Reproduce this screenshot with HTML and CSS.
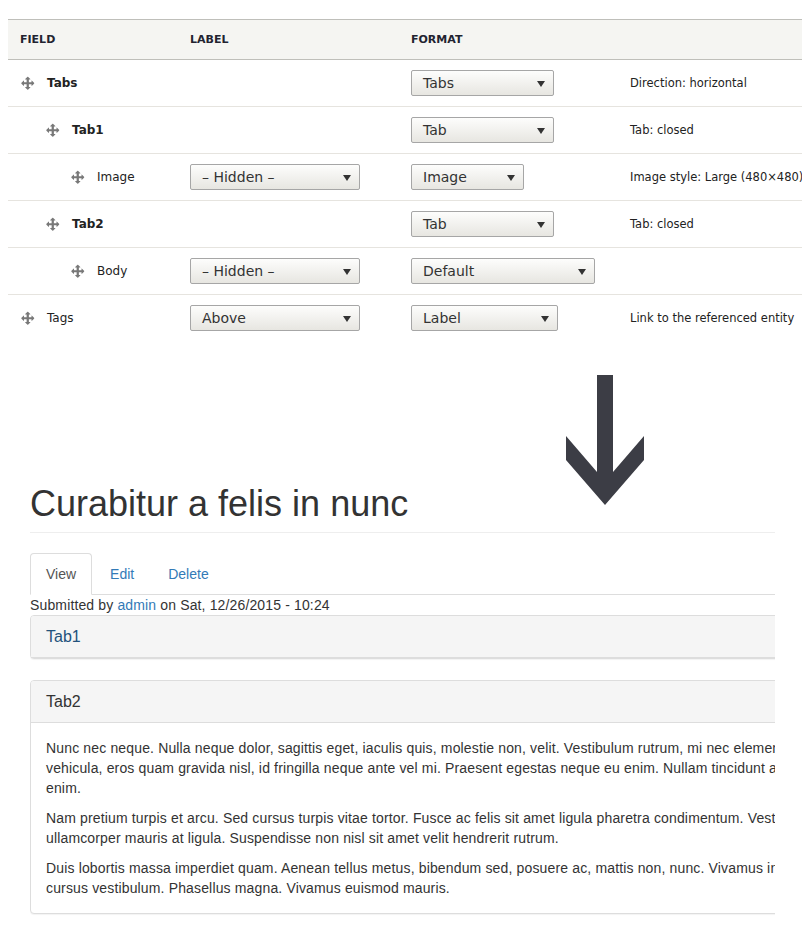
FILE: index.html
```html
<!DOCTYPE html>
<html lang="en">
<head>
<meta charset="utf-8">
<title>Field group tabs</title>
<link rel="stylesheet" href="styles.css">
</head>
<body>
<div class="page">
  <section class="field-ui">
    <table class="fields">
      <thead>
        <tr>
          <th class="c-field">Field</th>
          <th class="c-label">Label</th>
          <th class="c-format">Format</th>
          <th class="c-summary"></th>
        </tr>
      </thead>
      <tbody>
        <tr>
          <td><div class="field"><svg class="move" viewBox="0 0 16 16"><path d="M14.904 7.753l-2.373-2.372c-.291-.292-.529-.193-.529.22v1.399h-3v-3h1.4c.412 0 .511-.238.219-.53l-2.371-2.372c-.292-.292-.769-.292-1.061 0l-2.372 2.372c-.292.292-.193.53.22.53h1.398v3h-3v-1.4c0-.413-.239-.511-.53-.22l-2.372 2.372c-.292.292-.292.769 0 1.061l2.372 2.371c.291.292.53.193.53-.219v-1.4h3v3h-1.4c-.413 0-.511.238-.22.529l2.374 2.373c.291.292.77.292 1.062 0l2.371-2.373c.293-.291.193-.529-.22-.529h-1.399v-3h3v1.4c0 .412.238.511.529.219l2.373-2.371c.292-.292.292-.769 0-1.061z"/></svg><span class="name group">Tabs</span></div></td>
          <td></td>
          <td><span class="select w-tabs">Tabs</span></td>
          <td class="summary">Direction: horizontal</td>
        </tr>
        <tr>
          <td><div class="field lvl1"><svg class="move" viewBox="0 0 16 16"><path d="M14.904 7.753l-2.373-2.372c-.291-.292-.529-.193-.529.22v1.399h-3v-3h1.4c.412 0 .511-.238.219-.53l-2.371-2.372c-.292-.292-.769-.292-1.061 0l-2.372 2.372c-.292.292-.193.53.22.53h1.398v3h-3v-1.4c0-.413-.239-.511-.53-.22l-2.372 2.372c-.292.292-.292.769 0 1.061l2.372 2.371c.291.292.53.193.53-.219v-1.4h3v3h-1.4c-.413 0-.511.238-.22.529l2.374 2.373c.291.292.77.292 1.062 0l2.371-2.373c.293-.291.193-.529-.22-.529h-1.399v-3h3v1.4c0 .412.238.511.529.219l2.373-2.371c.292-.292.292-.769 0-1.061z"/></svg><span class="name group">Tab1</span></div></td>
          <td></td>
          <td><span class="select w-tabs">Tab</span></td>
          <td class="summary">Tab: closed</td>
        </tr>
        <tr>
          <td><div class="field lvl2"><svg class="move" viewBox="0 0 16 16"><path d="M14.904 7.753l-2.373-2.372c-.291-.292-.529-.193-.529.22v1.399h-3v-3h1.4c.412 0 .511-.238.219-.53l-2.371-2.372c-.292-.292-.769-.292-1.061 0l-2.372 2.372c-.292.292-.193.53.22.53h1.398v3h-3v-1.4c0-.413-.239-.511-.53-.22l-2.372 2.372c-.292.292-.292.769 0 1.061l2.372 2.371c.291.292.53.193.53-.219v-1.4h3v3h-1.4c-.413 0-.511.238-.22.529l2.374 2.373c.291.292.77.292 1.062 0l2.371-2.373c.293-.291.193-.529-.22-.529h-1.399v-3h3v1.4c0 .412.238.511.529.219l2.373-2.371c.292-.292.292-.769 0-1.061z"/></svg><span class="name">Image</span></div></td>
          <td><span class="select w-label">– Hidden –</span></td>
          <td><span class="select w-image">Image</span></td>
          <td class="summary">Image style: Large (480×480)</td>
        </tr>
        <tr>
          <td><div class="field lvl1"><svg class="move" viewBox="0 0 16 16"><path d="M14.904 7.753l-2.373-2.372c-.291-.292-.529-.193-.529.22v1.399h-3v-3h1.4c.412 0 .511-.238.219-.53l-2.371-2.372c-.292-.292-.769-.292-1.061 0l-2.372 2.372c-.292.292-.193.53.22.53h1.398v3h-3v-1.4c0-.413-.239-.511-.53-.22l-2.372 2.372c-.292.292-.292.769 0 1.061l2.372 2.371c.291.292.53.193.53-.219v-1.4h3v3h-1.4c-.413 0-.511.238-.22.529l2.374 2.373c.291.292.77.292 1.062 0l2.371-2.373c.293-.291.193-.529-.22-.529h-1.399v-3h3v1.4c0 .412.238.511.529.219l2.373-2.371c.292-.292.292-.769 0-1.061z"/></svg><span class="name group">Tab2</span></div></td>
          <td></td>
          <td><span class="select w-tabs">Tab</span></td>
          <td class="summary">Tab: closed</td>
        </tr>
        <tr>
          <td><div class="field lvl2"><svg class="move" viewBox="0 0 16 16"><path d="M14.904 7.753l-2.373-2.372c-.291-.292-.529-.193-.529.22v1.399h-3v-3h1.4c.412 0 .511-.238.219-.53l-2.371-2.372c-.292-.292-.769-.292-1.061 0l-2.372 2.372c-.292.292-.193.53.22.53h1.398v3h-3v-1.4c0-.413-.239-.511-.53-.22l-2.372 2.372c-.292.292-.292.769 0 1.061l2.372 2.371c.291.292.53.193.53-.219v-1.4h3v3h-1.4c-.413 0-.511.238-.22.529l2.374 2.373c.291.292.77.292 1.062 0l2.371-2.373c.293-.291.193-.529-.22-.529h-1.399v-3h3v1.4c0 .412.238.511.529.219l2.373-2.371c.292-.292.292-.769 0-1.061z"/></svg><span class="name">Body</span></div></td>
          <td><span class="select w-label">– Hidden –</span></td>
          <td><span class="select w-default">Default</span></td>
          <td class="summary"></td>
        </tr>
        <tr>
          <td><div class="field"><svg class="move" viewBox="0 0 16 16"><path d="M14.904 7.753l-2.373-2.372c-.291-.292-.529-.193-.529.22v1.399h-3v-3h1.4c.412 0 .511-.238.219-.53l-2.371-2.372c-.292-.292-.769-.292-1.061 0l-2.372 2.372c-.292.292-.193.53.22.53h1.398v3h-3v-1.4c0-.413-.239-.511-.53-.22l-2.372 2.372c-.292.292-.292.769 0 1.061l2.372 2.371c.291.292.53.193.53-.219v-1.4h3v3h-1.4c-.413 0-.511.238-.22.529l2.374 2.373c.291.292.77.292 1.062 0l2.371-2.373c.293-.291.193-.529-.22-.529h-1.399v-3h3v1.4c0 .412.238.511.529.219l2.373-2.371c.292-.292.292-.769 0-1.061z"/></svg><span class="name">Tags</span></div></td>
          <td><span class="select w-label">Above</span></td>
          <td><span class="select w-labelfmt">Label</span></td>
          <td class="summary">Link to the referenced entity</td>
        </tr>
      </tbody>
    </table>
  </section>

  <svg class="arrow" viewBox="0 0 78 130"><polygon points="31,0 47,0 47,97 78,61 78,85 39,130 0,85 0,61 31,97"/></svg>

  <article class="node">
    <div class="node-inner">
      <h1 class="page-header">Curabitur a felis in nunc</h1>
      <ul class="tabs">
        <li class="active"><a href="#">View</a></li>
        <li><a href="#">Edit</a></li>
        <li><a href="#">Delete</a></li>
      </ul>
      <div class="submitted">Submitted by <a href="#">admin</a> on Sat, 12/26/2015 - 10:24</div>
      <div class="panel">
        <div class="panel-heading"><a class="panel-title link" href="#">Tab1</a></div>
      </div>
      <div class="panel">
        <div class="panel-heading"><span class="panel-title">Tab2</span></div>
        <div class="panel-body">
          <p>Nunc nec neque. Nulla neque dolor, sagittis eget, iaculis quis, molestie non, velit. Vestibulum rutrum, mi nec elementum vehicula, eros quam gravida nisl, id fringilla neque ante vel mi. Praesent egestas neque eu enim. Nullam tincidunt adipiscing enim.</p>
          <p>Nam pretium turpis et arcu. Sed cursus turpis vitae tortor. Fusce ac felis sit amet ligula pharetra condimentum. Vestibulum ullamcorper mauris at ligula. Suspendisse non nisl sit amet velit hendrerit rutrum.</p>
          <p>Duis lobortis massa imperdiet quam. Aenean tellus metus, bibendum sed, posuere ac, mattis non, nunc. Vivamus in erat ut urna cursus vestibulum. Phasellus magna. Vivamus euismod mauris.</p>
        </div>
      </div>
    </div>
  </article>
</div>
</body>
</html>
```

FILE: styles.css
```css
html, body {
  margin: 0;
  padding: 0;
  background: #fff;
}

.page {
  position: relative;
  width: 802px;
  overflow: hidden;
}

/* ---------- Field UI table ---------- */
.field-ui {
  padding: 19px 0 0 8px;
  font-family: "DejaVu Sans", "Lucida Sans Unicode", sans-serif;
  color: #222330;
}

.fields {
  border-collapse: collapse;
  table-layout: fixed;
  width: 794px;
}

.fields th,
.fields td {
  box-sizing: border-box;
  text-align: left;
}

.fields th {
  background: #f5f5f2;
  border-top: 1px solid #bfbfba;
  border-bottom: 1px solid #bfbfba;
  text-transform: uppercase;
  font-size: 11px;
  font-weight: bold;
  line-height: 15px;
  padding: 12px 12px;
}

.c-field { width: 170px; }
.c-label { width: 221px; }
.c-format { width: 219px; }

.fields td {
  padding: 10px 12px;
  height: 47px;
  border-bottom: 1px solid #e6e4df;
  font-size: 12px;
  vertical-align: middle;
  white-space: nowrap;
}

.fields tbody tr:last-child td {
  border-bottom: 0;
}

.field {
  display: flex;
  align-items: center;
}

.field.lvl1 { padding-left: 25px; }
.field.lvl2 { padding-left: 50px; }

.move {
  width: 14px;
  height: 14px;
  margin: 0 12px 0 1px;
  fill: #787878;
  flex: none;
}

.name {
  font-size: 12px;
  color: #222;
}

.name.group {
  font-weight: bold;
}

.fields td.summary {
  font-size: 11.5px;
  color: #222;
}

.select {
  display: inline-block;
  position: relative;
  box-sizing: border-box;
  height: 26px;
  line-height: 24px;
  border: 1px solid #a6a6a6;
  border-radius: 2px;
  background: linear-gradient(#fdfdfc, #e7e6e1);
  font-size: 14px;
  color: #333;
  padding: 0 24px 0 11px;
  vertical-align: middle;
}

.select::after {
  content: "";
  position: absolute;
  right: 8px;
  top: 10px;
  border-left: 4.5px solid transparent;
  border-right: 4.5px solid transparent;
  border-top: 6px solid #333;
}

.w-tabs { width: 143px; }
.w-label { width: 170px; }
.w-image { width: 113px; }
.w-default { width: 184px; }
.w-labelfmt { width: 147px; }

/* ---------- Arrow ---------- */
.arrow {
  position: absolute;
  left: 566px;
  top: 375px;
  width: 78px;
  height: 130px;
  fill: #3c3d45;
}

/* ---------- Rendered node ---------- */
.node {
  margin-left: 30px;
  width: 745px;
  overflow: hidden;
  padding-top: 142px;
  font-family: "Liberation Sans", Arial, Helvetica, sans-serif;
  font-size: 14px;
  line-height: 20px;
  color: #333;
}

.node-inner {
  width: 900px;
}

.node a {
  color: #337ab7;
  text-decoration: none;
}

.page-header {
  margin: 0 0 20px;
  padding-bottom: 9px;
  border-bottom: 1px solid #eee;
  font-size: 36px;
  font-weight: normal;
  line-height: 1.1;
  color: #333;
}

.tabs {
  display: flex;
  list-style: none;
  margin: 0;
  padding: 0;
  border-bottom: 1px solid #ddd;
}

.tabs li {
  margin: 0 2px -1px 0;
}

.tabs a {
  display: block;
  padding: 10px 15px;
  line-height: 20px;
  border: 1px solid transparent;
  border-radius: 4px 4px 0 0;
}

.tabs .active a {
  color: #555;
  background: #fff;
  border-color: #ddd #ddd transparent;
}

.submitted {
  line-height: 20px;
  letter-spacing: 0.14px;
}

.panel {
  width: 848px;
  margin-bottom: 21px;
  background: #fff;
  border: 1px solid #ddd;
  border-radius: 4px;
  box-shadow: 0 1px 1px rgba(0, 0, 0, 0.05);
}

.panel-heading {
  padding: 10px 15px;
  background: #f5f5f5;
  border-bottom: 1px solid #ddd;
  border-radius: 3px 3px 0 0;
  font-size: 16px;
  line-height: 21px;
}

.panel-title {
  color: #333;
}

.node a.panel-title.link {
  color: #23527c;
}

.panel-body {
  padding: 15px;
  letter-spacing: 0.15px;
}

.panel-body p {
  margin: 0 0 10px;
}

.panel-body p:last-child {
  margin-bottom: 0;
}
```
